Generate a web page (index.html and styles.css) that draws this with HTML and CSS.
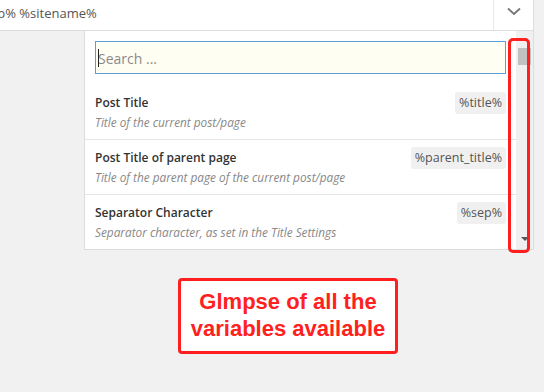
FILE: index.html
```html
<!DOCTYPE html>
<html>
<head>
  <meta charset="utf-8">
  <link rel="stylesheet" href="styles.css">
</head>
<body>
  <div class="field">
    <div class="field-value">%sep% %sitename%</div>
    <div class="field-toggle">
      <svg width="14" height="9" viewBox="0 0 14 9"><path d="M1 1.5 L7 7 L13 1.5" fill="none" stroke="#777" stroke-width="1.8"/></svg>
    </div>
  </div>

  <div class="dropdown">
    <div class="dropdown-body">
      <div class="search">Search ...</div>

      <ul class="items">
        <li class="item">
          <div class="item-text">
            <div class="item-title">Post Title</div>
            <div class="item-desc">Title of the current post/page</div>
          </div>
          <span class="tag">%title%</span>
        </li>

        <li class="item">
          <div class="item-text">
            <div class="item-title">Post Title of parent page</div>
            <div class="item-desc">Title of the parent page of the current post/page</div>
          </div>
          <span class="tag">%parent_title%</span>
        </li>

        <li class="item">
          <div class="item-text">
            <div class="item-title">Separator Character</div>
            <div class="item-desc">Separator character, as set in the Title Settings</div>
          </div>
          <span class="tag">%sep%</span>
        </li>
      </ul>
    </div>
    <div class="scrollbar">
      <div class="scroll-thumb"></div>
      <svg width="8" height="4" viewBox="0 0 8 4"><path d="M0 0 H8 L4 4 Z" fill="#555"/></svg>
    </div>
    <div class="highlight"></div>
  </div>

  <div class="note">Glmpse of all the<br>variables available</div>
</body>
</html>
```

FILE: styles.css
```css
* {
  margin: 0;
  padding: 0;
  box-sizing: border-box;
}

body {
  width: 544px;
  height: 392px;
  overflow: hidden;
  background: #f1f1f1;
  font-family: 'Open Sans', 'Noto Sans', sans-serif;
  color: #333;
}

.field {
  width: 534px;
  height: 31px;
  background: #fff;
  border-right: 1px solid #ddd;
  border-bottom: 1px solid #ddd;
  display: flex;
}

.field-value {
  flex: 1;
  overflow: hidden;
  white-space: nowrap;
  font-size: 13px;
  line-height: 26px;
  color: #555;
  text-indent: -27px;
}

.field-toggle {
  width: 40px;
  border-left: 1px solid #e8e8e8;
  display: flex;
  align-items: center;
  justify-content: center;
  padding-bottom: 8px;
}

.dropdown {
  position: relative;
  margin-left: 84px;
  width: 450px;
  height: 219px;
  background: #fff;
  border: 1px solid #ddd;
  border-top: none;
  display: flex;
}

.dropdown-body {
  flex: 1;
  padding: 10px 0 0;
  overflow: hidden;
}

.search {
  position: relative;
  height: 33px;
  margin: 0 10px;
  border: 1px solid #5b9dd9;
  background: #fffef3;
  color: #8a8a8a;
  font-size: 14px;
  line-height: 33px;
  padding-left: 2px;
}

/* text caret */
.search::before {
  content: '';
  position: absolute;
  left: 2px;
  top: 7px;
  width: 1px;
  height: 18px;
  background: #222;
}

.items {
  list-style: none;
  margin-top: 11px;
}

.item {
  display: flex;
  justify-content: space-between;
  align-items: flex-start;
  height: 55px;
  padding: 7px 10px 0;
  border-bottom: 1px solid #e5e5e5;
}

.item:last-child {
  border-bottom: none;
}

.item-title {
  font-size: 12px;
  font-weight: 600;
  color: #333;
  line-height: 20px;
  padding-top: 1px;
}

.item-desc {
  font-size: 11.8px;
  font-style: italic;
  color: #888;
  line-height: 18px;
}

.tag {
  background: #f0f0f0;
  border-radius: 3px;
  font-size: 12.5px;
  color: #555;
  line-height: 22px;
  padding: 0 4px;
}

.scrollbar {
  width: 17px;
  background: #f0f0f0;
  display: flex;
  flex-direction: column;
  align-items: center;
  justify-content: space-between;
  padding: 17px 0 8px;
}

.scroll-thumb {
  width: 13px;
  height: 17px;
  background: #c1c1c1;
}

/* annotation outline */
.highlight {
  position: absolute;
  left: 423px;
  top: 7px;
  width: 22px;
  height: 215px;
  border: 3px solid #ff1f1f;
  border-radius: 5px;
}

.note {
  width: 220px;
  height: 76px;
  margin: 28px 0 0 178px;
  background: #fff;
  border: 3px solid #ff1f1f;
  border-radius: 4px;
  font-family: 'Liberation Sans', Arial, sans-serif;
  font-weight: bold;
  font-size: 22px;
  line-height: 27px;
  color: #ff2020;
  text-align: center;
  padding-top: 7px;
}
```
